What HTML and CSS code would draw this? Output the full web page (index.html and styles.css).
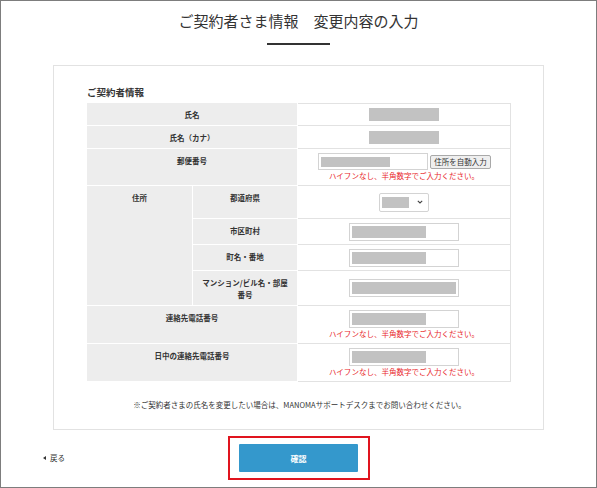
FILE: index.html
```html
<!DOCTYPE html>
<html lang="ja">
<head>
<meta charset="utf-8">
<title>ご契約者さま情報 変更内容の入力</title>
<link rel="stylesheet" href="styles.css">
</head>
<body>
<div class="frame">
  <header class="page-head">
    <h1 class="page-title">ご契約者さま情報　変更内容の入力</h1>
    <div class="title-bar"></div>
  </header>

  <section class="card">
    <h2 class="card-title">ご契約者情報</h2>
    <table class="form-table">
      <colgroup><col class="c1"><col class="c2"><col class="c3"></colgroup>
      <tr class="h23 first">
        <th colspan="2">氏名</th>
        <td><span class="blk blk-name"></span></td>
      </tr>
      <tr class="h23">
        <th colspan="2">氏名（カナ）</th>
        <td><span class="blk blk-name"></span></td>
      </tr>
      <tr class="h37">
        <th colspan="2">郵便番号</th>
        <td>
          <div class="zip-line">
            <span class="inp inp-zip"><span class="blk blk-zip"></span></span>
            <button class="auto-btn" type="button">住所を自動入力</button>
          </div>
          <p class="err">ハイフンなし、半角数字でご入力ください。</p>
        </td>
      </tr>
      <tr class="h33">
        <th rowspan="4">住所</th>
        <th>都道府県</th>
        <td>
          <span class="sel"><span class="blk blk-sel"></span><svg class="chev" width="6" height="4" viewBox="0 0 6 4"><path d="M0.8 0.8 L3 3 L5.2 0.8" fill="none" stroke="#444" stroke-width="1.1"/></svg></span>
        </td>
      </tr>
      <tr class="h26">
        <th>市区町村</th>
        <td><span class="inp"><span class="blk blk-mid"></span></span></td>
      </tr>
      <tr class="h26">
        <th>町名・番地</th>
        <td><span class="inp"><span class="blk blk-mid"></span></span></td>
      </tr>
      <tr class="h35">
        <th>マンション/ビル名・部屋番号</th>
        <td><span class="inp"><span class="blk blk-full"></span></span></td>
      </tr>
      <tr class="h38">
        <th colspan="2">連絡先電話番号</th>
        <td>
          <span class="inp"><span class="blk blk-mid"></span></span>
          <p class="err">ハイフンなし、半角数字でご入力ください。</p>
        </td>
      </tr>
      <tr class="h38">
        <th colspan="2">日中の連絡先電話番号</th>
        <td>
          <span class="inp"><span class="blk blk-mid"></span></span>
          <p class="err">ハイフンなし、半角数字でご入力ください。</p>
        </td>
      </tr>
    </table>
    <p class="note">※ご契約者さまの氏名を変更したい場合は、MANOMAサポートデスクまでお問い合わせください。</p>
  </section>

  <footer class="page-foot">
    <a class="back" href="#"><span class="tri"></span>戻る</a>
    <div class="highlight"><button class="confirm" type="button">確認</button></div>
    <span class="spacer"></span>
  </footer>
</div>
</body>
</html>
```

FILE: styles.css
```css
* { box-sizing: border-box; }

html, body {
  margin: 0;
  padding: 0;
  background: #fff;
}

body {
  font-family: "Noto Sans CJK JP", "Noto Sans", "Liberation Sans", sans-serif;
  color: #333;
}

.frame {
  width: 597px;
  height: 488px;
  border: 1px solid #7d7d7d;
  overflow: hidden;
  display: flex;
  flex-direction: column;
}

/* header */
.page-head {
  padding-top: 10px;
  display: flex;
  flex-direction: column;
  align-items: center;
}

.page-title {
  margin: 0;
  font-size: 15px;
  line-height: 20px;
  font-weight: 400;
  color: #333;
}

.title-bar {
  width: 63px;
  height: 2px;
  background: #333;
  margin-top: 12px;
}

/* card */
.card {
  margin: 20px 0 0 52px;
  width: 491px;
  border: 1px solid #e2e2e2;
  padding: 20px 31px 18px 33px;
}

.card-title {
  margin: 0 0 5px;
  font-size: 9.5px;
  line-height: 12px;
  font-weight: 700;
  color: #333;
}

.form-table {
  width: 424px;
  table-layout: fixed;
  border-collapse: separate;
  border-spacing: 0;
}

.c1 { width: 106px; }
.c2 { width: 105px; }
.c3 { width: 213px; }

.form-table th {
  background: #ededed;
  border-right: 1px solid #fff;
  border-bottom: 1px solid #fff;
  vertical-align: top;
  padding: 6px 8px 0;
  font-size: 7.5px;
  line-height: 12px;
  font-weight: 700;
  color: #333;
  text-align: center;
}

.form-table td {
  border-right: 1px solid #e2e2e2;
  border-bottom: 1px solid #e2e2e2;
  vertical-align: middle;
  text-align: center;
  padding: 0;
  font-size: 0;
}

.form-table tr.first td { border-top: 1px solid #e2e2e2; }

.h23 { height: 23px; }
.h26 { height: 26px; }
.h33 { height: 33px; }
.h35 { height: 35px; }
.h37 { height: 37px; }
.h38 { height: 38px; }

/* redacted values */
.blk {
  display: inline-block;
  background: #c2c2c2;
}
.blk-name { width: 70px; height: 13px; }
.blk-zip { width: 69px; height: 10px; }
.blk-sel { width: 27px; height: 11px; }
.blk-mid { width: 74px; height: 12px; }
.blk-full { width: 104px; height: 12px; }

.inp {
  display: inline-flex;
  align-items: center;
  width: 110px;
  height: 18px;
  padding: 0 2px;
  border: 1px solid #d3d3d3;
  background: #fff;
  vertical-align: middle;
}

.zip-line {
  display: flex;
  justify-content: center;
  align-items: center;
  gap: 2px;
  padding-left: 1px;
}

.inp-zip { width: 110px; height: 17px; }

.auto-btn {
  margin: 0;
  height: 14px;
  padding: 0 3px;
  border: 1px solid #a9a9a9;
  border-radius: 2px;
  background: #efefef;
  font-family: inherit;
  font-size: 7.5px;
  line-height: 12px;
  color: #333;
}

.sel {
  display: inline-flex;
  align-items: center;
  justify-content: space-between;
  width: 50px;
  height: 19px;
  padding: 0 5px 0 2px;
  border: 1px solid #d3d3d3;
  border-radius: 2px;
  background: #fff;
}

.chev { display: block; }

.err {
  margin: 1px 0 0;
  font-size: 7.5px;
  line-height: 10px;
  color: #e8262a;
}

.note {
  margin: 17px 0 0;
  font-size: 7.5px;
  line-height: 12px;
  text-align: center;
  color: #333;
}

/* footer */
.page-foot {
  margin-top: 6px;
  display: grid;
  grid-template-columns: 1fr auto 1fr;
  align-items: center;
}

.back {
  justify-self: start;
  margin-left: 42px;
  display: inline-flex;
  align-items: center;
  gap: 4px;
  font-size: 7.5px;
  line-height: 12px;
  color: #333;
  text-decoration: none;
}

.tri {
  width: 0;
  height: 0;
  border-top: 2.5px solid transparent;
  border-bottom: 2.5px solid transparent;
  border-right: 3px solid #333;
}

.highlight {
  width: 142px;
  height: 44px;
  border: 2px solid #e0141e;
  display: flex;
  align-items: center;
  justify-content: center;
}

.confirm {
  margin: 0;
  width: 119px;
  height: 28px;
  border: 0;
  border-radius: 1px;
  background: #3498cc;
  color: #fff;
  font-family: inherit;
  font-size: 8px;
  font-weight: 700;
}
```
